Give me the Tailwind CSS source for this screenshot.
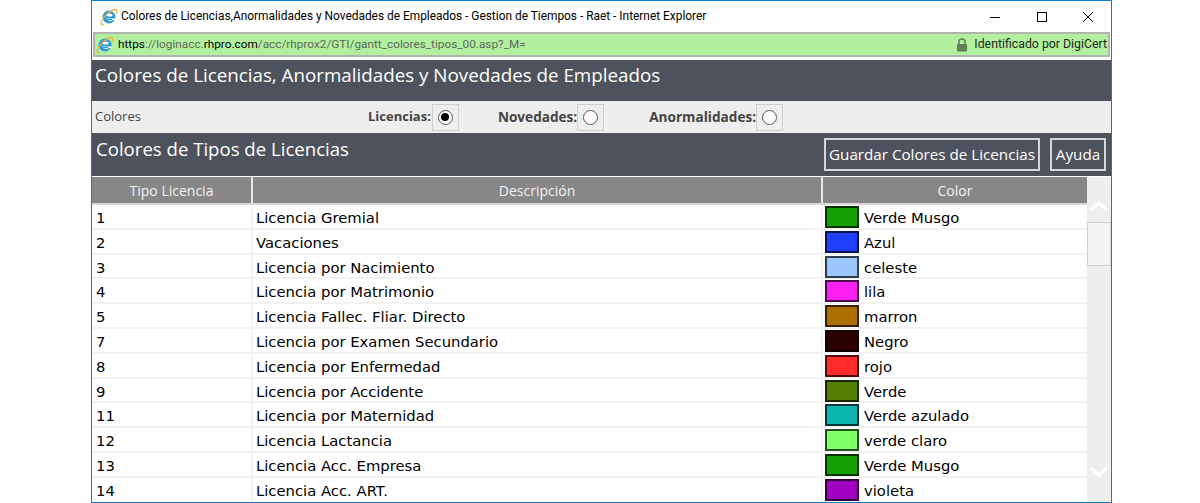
<!DOCTYPE html>
<html lang="en">
  <head>
    <meta charset="UTF-8" />
    <title>Colores de Licencias</title>
    <script src="https://cdn.jsdelivr.net/npm/@tailwindcss/browser@4"></script>
  </head>
  <body class="bg-white h-[503px] overflow-hidden">
    <!-- popup window -->
    <div class="ml-[91px] w-[1021px] h-[503px] border border-[#0a7fd0] bg-white flex flex-col overflow-hidden">
      <!-- title bar -->
      <div class="h-[31px] shrink-0 flex items-center pl-[8px] font-['Roboto',sans-serif] text-[11.900px] text-black">
        <svg class="w-[18px] h-[18px] mr-[3px]" viewBox="0 0 18 18">
          <circle cx="9" cy="9" r="6.500" fill="#2c9ce0" />
          <ellipse cx="9.500" cy="7" rx="3" ry="1.500" fill="#fff" />
          <path d="M6 10.500h9.500v1.500h-2.800c-.6 1-2 1.300-3 1-1.500-.4-3-1.300-3.700-2.500z" fill="#fff" />
          <path d="M7 11.500h5" stroke="#2c9ce0" stroke-width="1" />
          <path d="M1.800 13C4 8 10 2.500 15 1.500c2-.2 2.200 2 1 4.500M1.800 13c-1.500 3-.6 4.500 2 3.500" fill="none" stroke="#efb12e" stroke-width="1.300" />
        </svg>
        <span>Colores de Licencias,Anormalidades y Novedades de Empleados - Gestion de Tiempos - Raet - Internet Explorer</span>
        <div class="ml-auto flex items-center text-black">
          <svg class="w-[12px] h-[12px]" viewBox="0 0 12 12"><path d="M1 6.500h10" stroke="#000" /></svg>
          <svg class="w-[12px] h-[12px] ml-[35px]" viewBox="0 0 12 12"><rect x="1.500" y="1.500" width="9" height="9" fill="none" stroke="#000" /></svg>
          <svg class="w-[12px] h-[12px] ml-[34px] mr-[17px]" viewBox="0 0 12 12"><path d="M1 1l10 10M11 1L1 11" stroke="#000" /></svg>
        </div>
      </div>
      <!-- address bar -->
      <div class="h-[25px] shrink-0 mx-[1px] border-2 border-[#b1b5b0] bg-[#b2f0a0] flex items-center pl-[1px] pr-[1px] font-['Roboto',sans-serif] text-[11.800px] text-[#5a6a58]">
        <svg class="w-[18px] h-[18px] mr-[4px]" viewBox="0 0 18 18">
          <circle cx="9" cy="9" r="6.500" fill="#2c9ce0" />
          <ellipse cx="9.500" cy="7" rx="3" ry="1.500" fill="#fff" />
          <path d="M6 10.500h9.500v1.500h-2.800c-.6 1-2 1.300-3 1-1.500-.4-3-1.300-3.700-2.500z" fill="#fff" />
          <path d="M7 11.500h5" stroke="#2c9ce0" stroke-width="1" />
          <path d="M1.800 13C4 8 10 2.500 15 1.500c2-.2 2.200 2 1 4.500M1.800 13c-1.500 3-.6 4.500 2 3.500" fill="none" stroke="#efb12e" stroke-width="1.300" />
        </svg>
        <span><span class="text-black">https</span>://loginacc.<span class="text-black">rhpro.com</span>/acc/rhprox2/GTI/gantt_colores_tipos_00.asp?_M=</span>
        <svg class="ml-auto w-[12px] h-[14px] mr-[6px]" viewBox="0 0 12 14">
          <path d="M3 6V4a3 3 0 0 1 6 0v2" fill="none" stroke="#5d7f52" stroke-width="1.500" />
          <rect x="1" y="6" width="10" height="7.500" rx="1" fill="#5d7f52" />
        </svg>
        <span class="text-[#1c2a1a] text-[12.300px]">Identificado por DigiCert</span>
      </div>
      <div class="h-[3px] shrink-0"></div>
      <!-- page header -->
      <div class="h-[41px] shrink-0 bg-[#4e525c] text-white font-['Open_Sans',sans-serif] text-[18.800px] pl-[3px] pt-[1px]">Colores de Licencias, Anormalidades y Novedades de Empleados</div>
      <!-- radios -->
      <div class="h-[32px] shrink-0 bg-[#eeeeee] flex items-center pl-[3px] font-['Open_Sans',sans-serif] text-[13px] text-[#444]">
        <span class="w-[273px]">Colores</span>
        <span class="font-bold">Licencias:</span>
        <div class="w-[27px] h-[27px] ml-[1px] border border-[#cfcfcf] flex items-center justify-center">
          <span class="w-[15px] h-[15px] rounded-full border border-[#555] bg-white flex items-center justify-center"><span class="w-[8px] h-[8px] rounded-full bg-black"></span></span>
        </div>
        <span class="font-bold ml-[39px] text-[13.600px]">Novedades:</span>
        <div class="w-[27px] h-[27px] border border-[#cfcfcf] flex items-center justify-center">
          <span class="w-[15px] h-[15px] rounded-full border border-[#555] bg-white"></span>
        </div>
        <span class="font-bold ml-[45px] text-[13.600px]">Anormalidades:</span>
        <div class="w-[27px] h-[27px] border border-[#cfcfcf] flex items-center justify-center">
          <span class="w-[15px] h-[15px] rounded-full border border-[#555] bg-white"></span>
        </div>
      </div>
      <!-- section header -->
      <div class="h-[43px] shrink-0 bg-[#4e525c] text-white font-['Open_Sans',sans-serif] flex items-start pl-[4px] pr-[5px]">
        <span class="text-[18.600px] mt-[2px]">Colores de Tipos de Licencias</span>
        <button class="ml-auto mt-[5px] h-[33px] w-[216px] border-2 border-[#d4d6d9] text-[15.200px]">Guardar Colores de Licencias</button>
        <button class="ml-[10px] mt-[5px] h-[33px] w-[56px] border-2 border-[#d4d6d9] text-[15.200px]">Ayuda</button>
      </div>
      <!-- table + scrollbar -->
      <div class="flex flex-1 min-h-0 border-t border-white">
        <div class="w-[995px] shrink-0 font-['DejaVu_Sans',sans-serif] text-[14.800px] leading-[25px] text-black">
          <div class="h-[28px] flex bg-[#878787] text-[#f2f2f2] text-[14px] border-b-2 border-[#d8d8d8] font-['Open_Sans',sans-serif]">
            <div class="w-[161px] flex items-center justify-center border-r-2 border-[#e8e8e8]">Tipo Licencia</div>
            <div class="w-[570px] flex items-center justify-center border-r-2 border-[#e8e8e8]">Descripción</div>
            <div class="flex-1 flex items-center justify-center">Color</div>
          </div>
          <div class="flex h-[24.8px] border-b-2 border-[#f2f2f2]"><div class="w-[161px] pl-[4px] border-r-2 border-[#f2f2f2]">1</div><div class="w-[570px] pl-[3px] border-r-2 border-[#f2f2f2]">Licencia Gremial</div><div class="flex items-start pl-[2px]"><span class="w-[34px] h-[22px] mt-[1px] border-2 border-black/70 bg-[#13a000] mr-[5px]"></span>Verde Musgo</div></div>
          <div class="flex h-[24.8px] border-b-2 border-[#f2f2f2]"><div class="w-[161px] pl-[4px] border-r-2 border-[#f2f2f2]">2</div><div class="w-[570px] pl-[3px] border-r-2 border-[#f2f2f2]">Vacaciones</div><div class="flex items-start pl-[2px]"><span class="w-[34px] h-[22px] mt-[1px] border-2 border-black/70 bg-[#1f3fff] mr-[5px]"></span>Azul</div></div>
          <div class="flex h-[24.8px] border-b-2 border-[#f2f2f2]"><div class="w-[161px] pl-[4px] border-r-2 border-[#f2f2f2]">3</div><div class="w-[570px] pl-[3px] border-r-2 border-[#f2f2f2]">Licencia por Nacimiento</div><div class="flex items-start pl-[2px]"><span class="w-[34px] h-[22px] mt-[1px] border-2 border-black/70 bg-[#9cc8ff] mr-[5px]"></span>celeste</div></div>
          <div class="flex h-[24.8px] border-b-2 border-[#f2f2f2]"><div class="w-[161px] pl-[4px] border-r-2 border-[#f2f2f2]">4</div><div class="w-[570px] pl-[3px] border-r-2 border-[#f2f2f2]">Licencia por Matrimonio</div><div class="flex items-start pl-[2px]"><span class="w-[34px] h-[22px] mt-[1px] border-2 border-black/70 bg-[#f81ff0] mr-[5px]"></span>lila</div></div>
          <div class="flex h-[24.8px] border-b-2 border-[#f2f2f2]"><div class="w-[161px] pl-[4px] border-r-2 border-[#f2f2f2]">5</div><div class="w-[570px] pl-[3px] border-r-2 border-[#f2f2f2]">Licencia Fallec. Fliar. Directo</div><div class="flex items-start pl-[2px]"><span class="w-[34px] h-[22px] mt-[1px] border-2 border-black/70 bg-[#ad7000] mr-[5px]"></span>marron</div></div>
          <div class="flex h-[24.8px] border-b-2 border-[#f2f2f2]"><div class="w-[161px] pl-[4px] border-r-2 border-[#f2f2f2]">7</div><div class="w-[570px] pl-[3px] border-r-2 border-[#f2f2f2]">Licencia por Examen Secundario</div><div class="flex items-start pl-[2px]"><span class="w-[34px] h-[22px] mt-[1px] border-2 border-black/70 bg-[#2a0000] mr-[5px]"></span>Negro</div></div>
          <div class="flex h-[24.8px] border-b-2 border-[#f2f2f2]"><div class="w-[161px] pl-[4px] border-r-2 border-[#f2f2f2]">8</div><div class="w-[570px] pl-[3px] border-r-2 border-[#f2f2f2]">Licencia por Enfermedad</div><div class="flex items-start pl-[2px]"><span class="w-[34px] h-[22px] mt-[1px] border-2 border-black/70 bg-[#ff2a2a] mr-[5px]"></span>rojo</div></div>
          <div class="flex h-[24.8px] border-b-2 border-[#f2f2f2]"><div class="w-[161px] pl-[4px] border-r-2 border-[#f2f2f2]">9</div><div class="w-[570px] pl-[3px] border-r-2 border-[#f2f2f2]">Licencia por Accidente</div><div class="flex items-start pl-[2px]"><span class="w-[34px] h-[22px] mt-[1px] border-2 border-black/70 bg-[#557f00] mr-[5px]"></span>Verde</div></div>
          <div class="flex h-[24.8px] border-b-2 border-[#f2f2f2]"><div class="w-[161px] pl-[4px] border-r-2 border-[#f2f2f2]">11</div><div class="w-[570px] pl-[3px] border-r-2 border-[#f2f2f2]">Licencia por Maternidad</div><div class="flex items-start pl-[2px]"><span class="w-[34px] h-[22px] mt-[1px] border-2 border-black/70 bg-[#0cb5b0] mr-[5px]"></span>Verde azulado</div></div>
          <div class="flex h-[24.8px] border-b-2 border-[#f2f2f2]"><div class="w-[161px] pl-[4px] border-r-2 border-[#f2f2f2]">12</div><div class="w-[570px] pl-[3px] border-r-2 border-[#f2f2f2]">Licencia Lactancia</div><div class="flex items-start pl-[2px]"><span class="w-[34px] h-[22px] mt-[1px] border-2 border-black/70 bg-[#7fff66] mr-[5px]"></span>verde claro</div></div>
          <div class="flex h-[24.8px] border-b-2 border-[#f2f2f2]"><div class="w-[161px] pl-[4px] border-r-2 border-[#f2f2f2]">13</div><div class="w-[570px] pl-[3px] border-r-2 border-[#f2f2f2]">Licencia Acc. Empresa</div><div class="flex items-start pl-[2px]"><span class="w-[34px] h-[22px] mt-[1px] border-2 border-black/70 bg-[#13a000] mr-[5px]"></span>Verde Musgo</div></div>
          <div class="flex h-[24.8px]"><div class="w-[161px] pl-[4px] border-r-2 border-[#f2f2f2]">14</div><div class="w-[570px] pl-[3px] border-r-2 border-[#f2f2f2]">Licencia Acc. ART.</div><div class="flex items-start pl-[2px]"><span class="w-[34px] h-[22px] mt-[1px] border-2 border-black/70 bg-[#a000c0] mr-[5px]"></span>violeta</div></div>
        </div>
        <!-- scrollbar -->
        <div class="flex-1 bg-[#eeeeee] flex flex-col items-center">
          <svg class="w-[20px] h-[12px] mt-[23px]" viewBox="0 0 20 12"><path d="M2 10l8-7 8 7" fill="none" stroke="#fff" stroke-width="3" /></svg>
          <div class="w-full h-[44px] mt-[10px] bg-[#f4f4f4] border border-[#d2d2d2]"></div>
          <svg class="w-[20px] h-[12px] mt-[200px]" viewBox="0 0 20 12"><path d="M2 2l8 7 8-7" fill="none" stroke="#fff" stroke-width="3" /></svg>
        </div>
      </div>
    </div>
  </body>
</html>
